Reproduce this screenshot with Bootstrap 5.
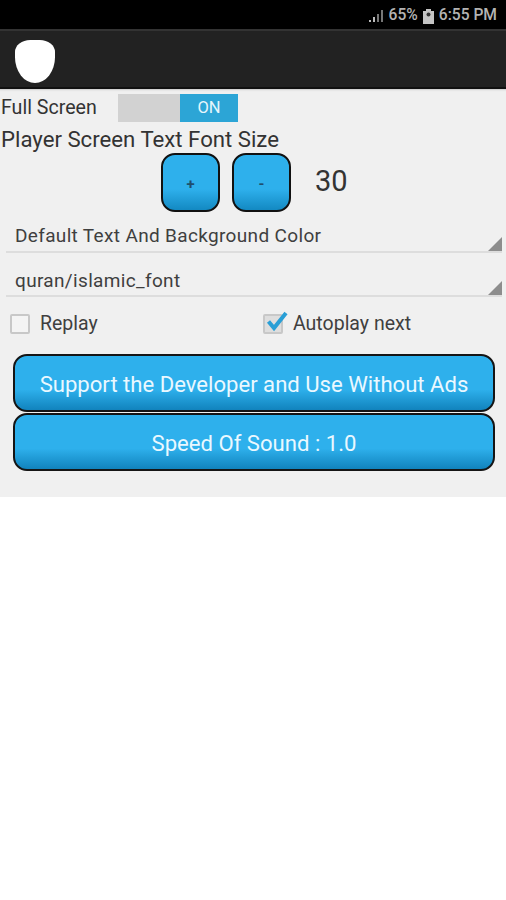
<!DOCTYPE html>
<html lang="en">
<head>
<meta charset="utf-8">
<title>Settings</title>
<link href="https://cdn.jsdelivr.net/npm/bootstrap@5.3.0/dist/css/bootstrap.min.css" rel="stylesheet">
<style>
html,body{background:#fff;}
body{font-family:Roboto,"Liberation Sans",sans-serif;color:#333;overflow:hidden;height:900px;}
.sbar{height:29px;background:#000;color:#b4b4b4;font-size:15.6px;font-weight:500;padding:3px 9px 0 0;gap:5px;}
.abar{height:60px;background:#222;border-top:2px solid #333;border-bottom:2px solid #111;padding-left:15px;}
.logo-blob{width:40px;height:43px;margin-top:5px;background:#fff;border-radius:38% 38% 50% 50%/28% 28% 60% 60%;filter:blur(.7px);}
.panel{height:408px;background:#f0f0f0;box-shadow:inset 0 3px 2px -2px #ccc;}
.fs-row{height:28px;margin-top:5px;}
.fs-label{width:118px;padding-left:1px;font-size:19.6px;line-height:27px;color:#333;}
.tog{width:120px;height:28px;background:#d2d2d2;}
.tog-on{width:58px;background:#2ca5d6;color:#e6f6fc;font-size:16.5px;}
.size-title{font-size:22.2px;line-height:26px;padding-left:1px;margin-top:4px;color:#333;white-space:nowrap;}
.step-row{height:60px;padding-left:161px;gap:12px;}
.step{width:59px;height:59px;border:2px solid #111;border-radius:14px;background:linear-gradient(#2eb0ec 0,#2eb0ec 62%,#1389c2 100%);color:#1f4f6e;font-size:15px;font-weight:700;padding:4px 0 0;}
.size-val{font-size:29px;margin-left:12px;color:#333;}
.spin{margin:0 4px 0 6px;height:44px;border-bottom:2px solid #ddd;position:relative;padding-left:9px;font-size:19px;color:#3f3f3f;letter-spacing:.34px;white-space:nowrap;}
.spin::after{content:"";position:absolute;right:0;bottom:0;width:0;height:0;border-left:14px solid transparent;border-bottom:14px solid #8d8d8d;}
.spin-a{height:39px;margin-top:2px;line-height:28px;padding-top:8px;}
.spin-b{line-height:28px;padding-top:14px;}
.chk-row{height:36px;margin-top:9px;font-size:19.5px;color:#3f3f3f;}
.chk-cell{width:253px;padding-left:10px;}
.chk-cell2{padding-left:10px;}
.box{width:20px;height:20px;border:2px solid #c8c8c8;border-radius:2px;background:#f4f4f4;margin-right:10px;position:relative;flex:none;}
.chk-on{background:#dedede;margin-right:10px;}
.tick{position:absolute;left:0;top:-6px;width:24px;height:24px;overflow:visible;}
.big-wrap{margin-top:12px;padding:0 11px 0 13px;gap:1px;}
.big{height:58px;width:100%;border:2px solid #151515;border-radius:14px;background:linear-gradient(#2eb0ec 0,#2eb0ec 62%,#1183bd 100%);color:#eaf8ff;font-size:22.1px;font-weight:400;padding:2px 0 0;line-height:1;white-space:nowrap;}
</style>
</head>
<body class="m-0">
<div class="sbar d-flex align-items-center justify-content-end">
  <svg width="16" height="14" viewBox="0 0 16 14"><path d="M1 11h2v2H1zM5 8h2v5H5z" fill="#bbb"/><path d="M9 5h2v8H9zM13 1h2v12h-2z" fill="#777"/></svg>
  <span>65%</span>
  <svg width="11" height="15" viewBox="0 0 11 15"><path d="M3 0h5v2h3v13H0V2h3z" fill="#c4c4c4"/><circle cx="5.500" cy="5.500" r="2" fill="#333"/></svg>
  <span>6:55 PM</span>
</div>
<div class="abar d-flex align-items-center"><div class="logo-blob"></div></div>
<main class="panel d-flex flex-column">
  <div class="fs-row d-flex">
    <div class="fs-label">Full Screen</div>
    <div class="tog d-flex justify-content-end"><div class="tog-on d-flex align-items-center justify-content-center">ON</div></div>
  </div>
  <div class="size-title">Player Screen Text Font Size</div>
  <div class="step-row d-flex align-items-center">
    <button type="button" class="btn step">+</button>
    <button type="button" class="btn step">-</button>
    <span class="size-val">30</span>
  </div>
  <div class="spin spin-a">Default Text And Background Color</div>
  <div class="spin spin-b">quran/islamic_font</div>
  <div class="chk-row d-flex align-items-center">
    <div class="chk-cell d-flex align-items-center"><span class="box"></span>Replay</div>
    <div class="chk-cell2 d-flex align-items-center"><span class="box chk-on"><svg class="tick" viewBox="0 0 24 24"><path d="M3.500 11.500 9 18 21 3" fill="none" stroke="#2a9fd6" stroke-width="4"/></svg></span>Autoplay next</div>
  </div>
  <div class="big-wrap d-flex flex-column">
    <button type="button" class="btn big">Support the Developer and Use Without Ads</button>
    <button type="button" class="btn big">Speed Of Sound : 1.0</button>
  </div>
</main>
<script src="https://cdn.jsdelivr.net/npm/bootstrap@5.3.0/dist/js/bootstrap.bundle.min.js"></script>
</body>
</html>
